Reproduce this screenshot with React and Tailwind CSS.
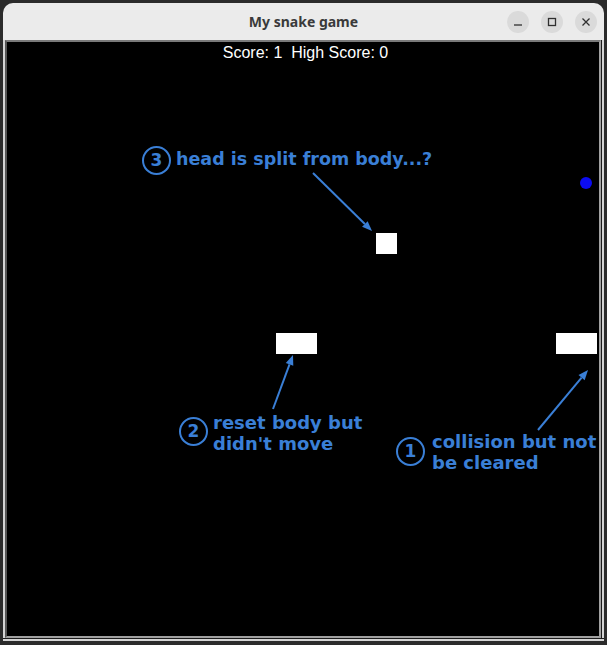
import React from 'react';

const BLUE = '#3a7fd6';

const Badge = ({ n, className }) => (
    <div
        className={`absolute w-[29px] h-[29px] rounded-full border-2 border-[#3a7fd6] flex items-center justify-center text-[#3a7fd6] text-[17px] font-bold leading-none ${className}`}
    >
        {n}
    </div>
);

const Arrow = ({ x1, y1, x2, y2 }) => {
    const a = Math.atan2(y2 - y1, x2 - x1);
    const len = 10;
    const w = 4;
    const bx = x2 - len * Math.cos(a);
    const by = y2 - len * Math.sin(a);
    const px = -Math.sin(a) * w;
    const py = Math.cos(a) * w;
    return (
        <g>
            <line x1={x1} y1={y1} x2={bx} y2={by} stroke={BLUE} strokeWidth="2" />
            <polygon points={`${x2},${y2} ${bx + px},${by + py} ${bx - px},${by - py}`} fill={BLUE} />
        </g>
    );
};

const TitleButton = ({ children }) => (
    <div className="w-[22px] h-[22px] rounded-full bg-[#dadada] flex items-center justify-center">
        <svg width="10" height="10" viewBox="0 0 10 10" fill="none" stroke="#2f2f2f" strokeWidth="1.3">
            {children}
        </svg>
    </div>
);

export default function App() {
    return (
        <div className="w-[607px] h-[645px] bg-[#2b2b2b] overflow-hidden pt-[3px] pl-[3px]">
            <div className="w-[601px] rounded-t-[10px] bg-[#ebebeb] flex flex-col">
                {/* Title bar */}
                <div className="relative h-[37px] flex items-center justify-center">
                    <span
                        className="text-[14px] font-bold text-[#3a3a3a]"
                        style={{ fontFamily: '"Noto Sans", "DejaVu Sans", sans-serif' }}
                    >
                        My snake game
                    </span>
                    <div className="absolute right-[7px] top-[8px] flex gap-[12px]">
                        <TitleButton>
                            <line x1="1" y1="8" x2="9" y2="8" />
                        </TitleButton>
                        <TitleButton>
                            <rect x="1.5" y="1.5" width="7" height="7" />
                        </TitleButton>
                        <TitleButton>
                            <path d="M1.5 1.5 L8.5 8.5 M8.5 1.5 L1.5 8.5" />
                        </TitleButton>
                    </div>
                </div>

                {/* Window body */}
                <div className="flex pl-[2px] bg-[#d4d4d4]">
                    <div className="border-2 border-t-[#7a7a7a] border-l-[#555555] border-r-[#a0a0a0] border-b-[#a0a0a0]">
                        <div className="relative w-[592px] h-[594px] bg-black overflow-hidden">
                            <div
                                className="pt-[3px] pl-[5px] text-center text-white text-[16px] leading-[16px] whitespace-pre"
                                style={{ fontFamily: '"Liberation Sans", Arial, sans-serif' }}
                            >
                                Score: 1  High Score: 0
                            </div>

                            {/* snake pieces and food */}
                            <div className="absolute left-[369px] top-[191px] w-[21px] h-[21px] bg-white" />
                            <div className="absolute left-[269px] top-[291px] w-[41px] h-[21px] bg-white" />
                            <div className="absolute left-[549px] top-[291px] w-[41px] h-[21px] bg-white" />
                            <div className="absolute left-[573px] top-[135px] w-[12px] h-[12px] rounded-full bg-[#0c0cf2]" />

                            {/* annotations */}
                            <svg className="absolute inset-0" width="592" height="594">
                                <Arrow x1={306} y1={131} x2={365} y2={189} />
                                <Arrow x1={266} y1={367} x2={286} y2={313} />
                                <Arrow x1={531} y1={388} x2={581} y2={328} />
                            </svg>

                            <div
                                className="font-bold text-[#3a7fd6]"
                                style={{ fontFamily: '"DejaVu Sans", sans-serif' }}
                            >
                                <Badge n="3" className="left-[135px] top-[104px]" />
                                <div className="absolute left-[169px] top-[107px] text-[17.5px] leading-[20px] whitespace-nowrap">
                                    head is split from body...?
                                </div>

                                <Badge n="2" className="left-[172px] top-[375px]" />
                                <div className="absolute left-[206px] top-[370px] text-[18px] leading-[21px] whitespace-nowrap">
                                    reset body but
                                    <br />
                                    didn't move
                                </div>

                                <Badge n="1" className="left-[389px] top-[395px]" />
                                <div className="absolute left-[425px] top-[389px] text-[18px] leading-[21px] whitespace-nowrap">
                                    collision but not
                                    <br />
                                    be cleared
                                </div>
                            </div>
                        </div>
                    </div>
                    <div className="w-[1px] bg-[#1a1a1a]" />
                    <div className="w-[2px] bg-[#d4d4d4]" />
                </div>
                <div className="h-[1px] bg-[#1a1a1a]" />
                <div className="h-[2px] bg-[#d4d4d4]" />
            </div>
        </div>
    );
}
